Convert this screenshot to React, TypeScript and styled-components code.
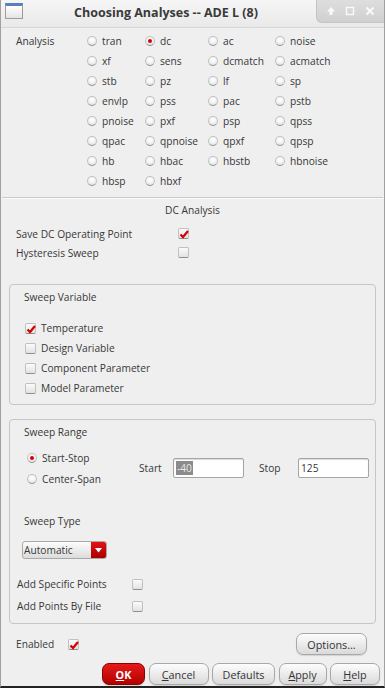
import React from 'react'
import styled, {createGlobalStyle} from 'styled-components'

const GlobalStyle = createGlobalStyle`
  html, body {
    margin: 0;
    padding: 0;
    background: #efefef;
  }
  body {
    font-family: "Open Sans", "Noto Sans", sans-serif;
    font-size: 10.2px;
    color: #383838;
  }
`

const Window = styled.div`
  width: 385px;
  height: 688px;
  box-sizing: border-box;
  display: flex;
  flex-direction: column;
  background: #efefef;
  border-left: 1px solid #a0a0a0;
  border-right: 1px solid #a0a0a0;
  border-bottom: 2px solid #222;
  overflow: hidden;
`

const TitleBar = styled.div`
  height: 28px;
  flex: none;
  display: grid;
  grid-template-columns: 30px 1fr 68px;
  background: linear-gradient(#f6f6f6, #e9e9e9);
  border-bottom: 1px solid #d6d6d6;
  box-sizing: border-box;
`

const AppIcon = styled.div`
  width: 18px;
  height: 16px;
  margin: 3px 0 0 4px;
  box-sizing: border-box;
  border: 1px solid #9c9c9c;
  border-top: 3px solid #5b7fbe;
  background: linear-gradient(#ffffff, #e4e4e4);
`

const Title = styled.div`
  text-align: center;
  font-weight: 700;
  font-size: 12.5px;
  line-height: 25px;
  color: #3a3a3a;
  padding-right: 15px;
`

const Controls = styled.div`
  height: 22px;
  display: flex;
  align-items: center;
  justify-content: space-around;
  padding: 0 4px;
  background: linear-gradient(#dedede, #d0d0d0);
  border-left: 1px solid #c4c4c4;
  border-bottom: 1px solid #c4c4c4;
  border-bottom-left-radius: 6px;
`

const AnalysisSection = styled.div`
  display: flex;
  padding: 3px 0 6px 15px;
`

const SectionLabel = styled.div`
  width: 71px;
  line-height: 20px;
`

const RadioGrid = styled.div`
  display: grid;
  grid-template-columns: 58px 63px 67px 1fr;
  grid-auto-rows: 20px;
`

const RadioItem = styled.label`
  display: flex;
  align-items: center;
  gap: 5px;
  white-space: nowrap;
`

const RadioDot = styled.span<{ $on?: boolean }>`
  position: relative;
  flex: none;
  width: 10px;
  height: 10px;
  box-sizing: border-box;
  border-radius: 50%;
  border: 1px solid #c2c2c2;
  border-bottom-color: #8f8f8f;
  background: radial-gradient(circle at 50% 35%, #ffffff 0, #f4f4f4 45%, #d4d4d4 100%);

  &::after {
    content: '';
    display: ${p => (p.$on ? 'block' : 'none')};
    position: absolute;
    left: 2px;
    top: 2px;
    width: 4px;
    height: 4px;
    border-radius: 50%;
    background: #d60000;
  }
`

const Separator = styled.div`
  margin: 0 1px;
  border-top: 1px solid #c8c8c8;
  border-bottom: 1px solid #fbfbfb;
`

const CenterTitle = styled.div`
  height: 22px;
  line-height: 22px;
  text-align: center;
  margin-bottom: 3px;
`

const FormBlock = styled.div`
  padding-left: 15px;
`

const FormRow = styled.div<{ $labelW: number; $h?: number }>`
  display: grid;
  grid-template-columns: ${p => p.$labelW}px auto 1fr;
  align-items: center;
  height: ${p => p.$h ?? 19}px;
`

const Group = styled.div<{ $top: number }>`
  margin: ${p => p.$top}px 8px 0 8px;
  border: 1px solid #c6c6c6;
  border-radius: 4px;
  padding: 4px 0 6px 0;
`

const GroupTitle = styled.div`
  height: 17px;
  line-height: 17px;
  padding-left: 14px;
`

const CheckList = styled.div`
  margin-top: 12px;
  padding-left: 15px;
`

const CheckItem = styled.label`
  display: flex;
  align-items: center;
  gap: 5px;
  height: 20px;
`

const Box = styled.span`
  position: relative;
  flex: none;
  width: 11px;
  height: 11px;
  box-sizing: border-box;
  border: 1px solid #c0c0c0;
  border-bottom-color: #8e8e8e;
  border-radius: 2px;
  background: linear-gradient(#fbfbfb, #e2e2e2);

  svg {
    position: absolute;
    left: -1px;
    top: -1px;
  }
`

const RangeRow = styled.div`
  display: flex;
  align-items: center;
  margin-top: 6px;
`

const RadioCol = styled.div`
  width: 112px;
  padding-left: 17px;

  ${RadioItem} {
    height: 21px;
  }
`

const FieldLabel = styled.span<{ $w: number }>`
  width: ${p => p.$w}px;
  flex: none;
`

const Field = styled.div<{ $gap?: number }>`
  width: 71px;
  height: 20px;
  box-sizing: border-box;
  margin-right: ${p => p.$gap ?? 0}px;
  border: 1px solid #a5a5a5;
  border-radius: 2px;
  background: #fff;
  box-shadow: inset 0 1px 1px rgba(0, 0, 0, 0.15);
  display: flex;
  align-items: center;
  padding-left: 2px;
`

const Selected = styled.span`
  background: #8b8b8b;
  color: #e8e8e8;
  padding: 0 1px;
  line-height: 14px;
`

const SubTitle = styled.div`
  height: 17px;
  line-height: 17px;
  padding-left: 14px;
  margin-top: 24px;
`

const Combo = styled.div`
  display: flex;
  width: 85px;
  height: 18px;
  box-sizing: border-box;
  margin: 11px 0 0 12px;
  border: 1px solid #a9a9a9;
  border-radius: 3px;
  background: linear-gradient(#fcfcfc, #dcdcdc);
  overflow: hidden;
`

const ComboText = styled.span`
  flex: 1;
  padding-left: 1px;
  line-height: 16px;
`

const ComboArrow = styled.span`
  width: 15px;
  display: flex;
  align-items: center;
  justify-content: center;
  background: linear-gradient(#e31313, #a90000);
`

const PointRows = styled.div`
  margin-top: 14px;
  padding-left: 7px;
`

const BottomRow = styled.div`
  display: flex;
  align-items: center;
  height: 22px;
  margin-top: 9px;
  padding: 0 17px 0 15px;
`

const EnabledLabel = styled.span`
  width: 52px;
`

const Spacer = styled.div`
  flex: 1;
`

const Btn = styled.button<{ $w: number; $primary?: boolean }>`
  width: ${p => p.$w}px;
  height: 22px;
  flex: none;
  padding: 0;
  font: inherit;
  font-size: 10.8px;
  border-radius: 7px;
  border: 1px solid ${p => (p.$primary ? '#8f0000' : '#a8a8a8')};
  background: ${p => (p.$primary ? 'linear-gradient(#e41b1b, #b30000)' : 'linear-gradient(#fdfdfd, #dadada)')};
  color: ${p => (p.$primary ? '#fff' : '#333')};
  font-weight: ${p => (p.$primary ? 700 : 400)};
  box-shadow: 0 1px 1px rgba(0, 0, 0, 0.12);
`

const ButtonBar = styled.div`
  display: flex;
  justify-content: flex-end;
  gap: 3.5px;
  margin-top: 8px;
  padding-right: 4px;
`

const analyses = [
  'tran', 'dc', 'ac', 'noise',
  'xf', 'sens', 'dcmatch', 'acmatch',
  'stb', 'pz', 'lf', 'sp',
  'envlp', 'pss', 'pac', 'pstb',
  'pnoise', 'pxf', 'psp', 'qpss',
  'qpac', 'qpnoise', 'qpxf', 'qpsp',
  'hb', 'hbac', 'hbstb', 'hbnoise',
  'hbsp', 'hbxf',
]

function Check({on}: { on?: boolean }) {
    return (
        <Box>
            {on && (
                <svg width="12" height="12" viewBox="0 0 12 12">
                    <path d="M2.5 6.5 L5 9 L10 3" fill="none" stroke="#d40000" strokeWidth="2.2"/>
                </svg>
            )}
        </Box>
    )
}

function Radio({label, on}: { label: string; on?: boolean }) {
    return (
        <RadioItem>
            <RadioDot $on={on}/>
            {label}
        </RadioItem>
    )
}

export default function App() {
    return (
        <>
            <GlobalStyle/>
            <Window>
                <TitleBar>
                    <AppIcon/>
                    <Title>Choosing Analyses -- ADE L (8)</Title>
                    <Controls>
                        <svg width="10" height="10" viewBox="0 0 10 10">
                            <path d="M5 1 L9 5.5 H6.5 V9 H3.5 V5.5 H1 Z" fill="#fafafa"/>
                        </svg>
                        <svg width="10" height="10" viewBox="0 0 10 10">
                            <rect x="1.5" y="1.5" width="7" height="7" fill="none" stroke="#fafafa" strokeWidth="1.4"/>
                        </svg>
                        <svg width="10" height="10" viewBox="0 0 10 10">
                            <path d="M1.5 1.5 L8.5 8.5 M8.5 1.5 L1.5 8.5" stroke="#fafafa" strokeWidth="2"/>
                        </svg>
                    </Controls>
                </TitleBar>

                <AnalysisSection>
                    <SectionLabel>Analysis</SectionLabel>
                    <RadioGrid>
                        {analyses.map(a => <Radio key={a} label={a} on={a === 'dc'}/>)}
                    </RadioGrid>
                </AnalysisSection>

                <Separator/>

                <CenterTitle>DC Analysis</CenterTitle>
                <FormBlock>
                    <FormRow $labelW={162}>
                        <span>Save DC Operating Point</span>
                        <Check on/>
                    </FormRow>
                    <FormRow $labelW={162}>
                        <span>Hysteresis Sweep</span>
                        <Check/>
                    </FormRow>
                </FormBlock>

                <Group $top={22}>
                    <GroupTitle>Sweep Variable</GroupTitle>
                    <CheckList>
                        <CheckItem><Check on/>Temperature</CheckItem>
                        <CheckItem><Check/>Design Variable</CheckItem>
                        <CheckItem><Check/>Component Parameter</CheckItem>
                        <CheckItem><Check/>Model Parameter</CheckItem>
                    </CheckList>
                </Group>

                <Group $top={14}>
                    <GroupTitle>Sweep Range</GroupTitle>
                    <RangeRow>
                        <RadioCol>
                            <Radio label="Start-Stop" on/>
                            <Radio label="Center-Span"/>
                        </RadioCol>
                        <FieldLabel $w={34}>Start</FieldLabel>
                        <Field $gap={15}><Selected>-40</Selected></Field>
                        <FieldLabel $w={39}>Stop</FieldLabel>
                        <Field>125</Field>
                    </RangeRow>

                    <SubTitle>Sweep Type</SubTitle>
                    <Combo>
                        <ComboText>Automatic</ComboText>
                        <ComboArrow>
                            <svg width="7" height="5" viewBox="0 0 7 5">
                                <path d="M0 0 H7 L3.5 4.5 Z" fill="#fff"/>
                            </svg>
                        </ComboArrow>
                    </Combo>

                    <PointRows>
                        <FormRow $labelW={115} $h={22}>
                            <span>Add Specific Points</span>
                            <Check/>
                        </FormRow>
                        <FormRow $labelW={115} $h={22}>
                            <span>Add Points By File</span>
                            <Check/>
                        </FormRow>
                    </PointRows>
                </Group>

                <BottomRow>
                    <EnabledLabel>Enabled</EnabledLabel>
                    <Check on/>
                    <Spacer/>
                    <Btn $w={71}>Options...</Btn>
                </BottomRow>

                <ButtonBar>
                    <Btn $w={43} $primary><u>O</u>K</Btn>
                    <Btn $w={60}><u>C</u>ancel</Btn>
                    <Btn $w={63}>Defaults</Btn>
                    <Btn $w={48}><u>A</u>pply</Btn>
                    <Btn $w={50}><u>H</u>elp</Btn>
                </ButtonBar>
            </Window>
        </>
    )
}
